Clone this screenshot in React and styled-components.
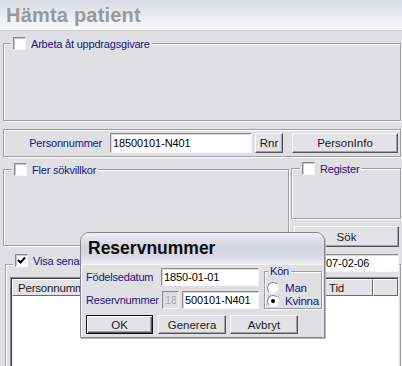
import React from "react";
import styled, { createGlobalStyle, css } from "styled-components";

const GlobalStyle = createGlobalStyle`
  html, body {
    margin: 0;
    padding: 0;
    background: #e0dfe3;
  }
  body {
    font-family: "Liberation Sans", Arial, sans-serif;
    font-size: 11px;
    letter-spacing: -0.2px;
  }
`;

const Window = styled.div`
  position: relative;
  width: 402px;
  height: 366px;
  overflow: hidden;
  background: #e0dfe3;
`;

const TitleBar = styled.div`
  height: 30px;
  display: flex;
  align-items: center;
  padding-left: 6px;
  border-bottom: 1px solid #cbcbd3;
  background: linear-gradient(#d9d9e4, #fbfbfd);
  font-size: 20px;
  font-weight: bold;
  letter-spacing: 0.2px;
  color: #99999d;
`;

const Content = styled.div`
  display: flex;
  flex-direction: column;
  padding: 0 1px 0 3px;
`;

const Group = styled.div`
  display: flex;
  flex-direction: column;
  box-sizing: border-box;
  height: ${(p) => p.$h}px;
  width: ${(p) => (p.$w ? `${p.$w}px` : "auto")};
  margin: ${(p) => p.$m || "0"};
  flex: ${(p) => (p.$grow ? 1 : "none")};
  border: 1px solid #9d9da3;
  box-shadow: inset 1px 1px 0 #fff, 1px 1px 0 #fff;
`;

const Legend = styled.div`
  display: flex;
  align-items: center;
  gap: 5px;
  align-self: flex-start;
  height: 13px;
  margin: ${(p) => (p.$inline ? "0" : "-7px")} 0 0 ${(p) => p.$ml ?? 7}px;
  padding: 0 2px;
  background: #e0dfe3;
  color: #16167c;
  white-space: nowrap;
`;

const Check = styled.span`
  display: inline-flex;
  align-items: center;
  justify-content: center;
  width: 13px;
  height: 13px;
  box-sizing: border-box;
  background: #fff;
  border: 1px solid;
  border-color: #8a8a8a #f4f4f4 #f4f4f4 #8a8a8a;
  box-shadow: inset 1px 1px 0 #c8c8c8;
`;

const Panel = styled.div`
  display: flex;
  align-items: center;
  height: 28px;
  margin-top: 8px;
  box-sizing: border-box;
  border: 1px solid #9d9da3;
  box-shadow: inset 1px 1px 0 #fff, 1px 1px 0 #fff;
`;

const Label = styled.span`
  width: ${(p) => p.$w}px;
  text-align: ${(p) => (p.$right ? "right" : "left")};
  color: #16167c;
  white-space: nowrap;
  flex: none;
`;

const Field = styled.input`
  box-sizing: border-box;
  width: ${(p) => p.$w}px;
  height: ${(p) => p.$h || 18}px;
  margin: 0 0 0 ${(p) => p.$ml || 0}px;
  padding: 0 2px;
  font: inherit;
  letter-spacing: -0.1px;
  color: #000;
  background: #fff;
  border: 1px solid;
  border-color: #8a8a8a #f6f6f6 #f6f6f6 #8a8a8a;
  box-shadow: inset 1px 1px 0 #d8d8d8;
  outline: none;
  flex: none;

  &:disabled {
    background: #e0dfe3;
    color: #a7a7ab;
    text-align: center;
  }
`;

const Button = styled.button`
  box-sizing: border-box;
  width: ${(p) => p.$w}px;
  height: ${(p) => p.$h || 20}px;
  margin: 0 0 0 ${(p) => p.$ml || 0}px;
  padding: 0;
  font: inherit;
  font-size: 11.5px;
  color: #1a1a1a;
  background: #e3e2e6;
  border: 1px solid;
  border-color: #fbfbfb #555 #555 #fbfbfb;
  box-shadow: inset -1px -1px 0 #a2a2a6;
  flex: none;

  ${(p) =>
    p.$default &&
    css`
      border: 1px solid #111;
      box-shadow: inset 1px 1px 0 #fbfbfb, inset -1px -1px 0 #555,
        inset -2px -2px 0 #a2a2a6;
    `}
`;

const Row = styled.div`
  display: flex;
  margin-top: ${(p) => p.$mt || 0}px;
`;

const SideColumn = styled.div`
  display: flex;
  flex-direction: column;
  width: 110px;
  margin: -1px 0 0 2px;
`;

const GroupHead = styled.div`
  display: flex;
  align-items: center;
  height: 18px;
  margin: -11px 1px 0 0;
`;

const ListView = styled.div`
  display: flex;
  flex-direction: column;
  flex: 1;
  margin: 5px 1px 0 4px;
  background: #fff;
  border: 1px solid;
  border-color: #8a8a8a #f6f6f6 #f6f6f6 #8a8a8a;
  box-shadow: inset 1px 1px 0 #404040;
  padding: 1px 0 0 1px;
`;

const ListHeader = styled.div`
  display: flex;
  height: 17px;
`;

const HeaderCell = styled.div`
  box-sizing: border-box;
  width: ${(p) => (p.$w ? `${p.$w}px` : "auto")};
  flex: ${(p) => (p.$w ? "none" : 1)};
  display: flex;
  align-items: center;
  padding-left: 5px;
  background: #e3e2e6;
  border: 1px solid;
  border-color: #fbfbfb #6a6a6a #6a6a6a #fbfbfb;
  font-size: 11.5px;
  color: #1a1a1a;
  white-space: nowrap;
  overflow: hidden;
`;

const Dialog = styled.div`
  position: absolute;
  left: 80px;
  top: 232px;
  width: 245px;
  height: 106px;
  box-sizing: border-box;
  display: flex;
  flex-direction: column;
  background: #e0dfe3;
  border: 1px solid #85859a;
  border-radius: 9px 9px 0 0;
  overflow: hidden;
  box-shadow: 1px 1px 0 #b8b8c4;
`;

const DialogTitle = styled.div`
  height: 31px;
  flex: none;
  display: flex;
  align-items: center;
  padding-left: 7px;
  background: linear-gradient(#eeeef4 0%, #d3d3df 45%, #d9d9e4 75%, #ececf2 100%);
  font-size: 17.5px;
  font-weight: bold;
  letter-spacing: 0;
  color: #0c0c0c;
`;

const DialogBody = styled.div`
  flex: 1;
  display: flex;
  flex-direction: column;
  padding: 3px 4px 0 4px;
  border-top: 1px solid #f8f8fb;
  border-left: 1px solid #f8f8fb;
`;

const Fields = styled.div`
  display: flex;
  flex-direction: column;
  gap: 5px;
`;

const FieldRow = styled.div`
  display: flex;
  align-items: center;
`;

const RadioRow = styled.div`
  display: flex;
  align-items: center;
  gap: 6px;
  height: 14px;
  color: #16167c;
  font-size: 11.5px;
  padding-left: 2px;
`;

const Radio = styled.span`
  display: inline-flex;
  align-items: center;
  justify-content: center;
  width: 12px;
  height: 12px;
  box-sizing: border-box;
  border-radius: 50%;
  background: #fff;
  border: 1px solid;
  border-color: #8a8a8a #f4f4f4 #f4f4f4 #8a8a8a;

  &::after {
    content: "";
    width: 4px;
    height: 4px;
    border-radius: 50%;
    background: ${(p) => (p.$on ? "#000" : "transparent")};
  }
`;

const CheckBox = ({ checked }) => (
  <Check>
    {checked && (
      <svg width="9" height="9" viewBox="0 0 9 9">
        <polyline
          points="1,4 3.5,6.5 8,1.5"
          fill="none"
          stroke="#000"
          strokeWidth="2"
        />
      </svg>
    )}
  </Check>
);

export default function App() {
  return (
    <>
      <GlobalStyle />
      <Window>
        <TitleBar>Hämta patient</TitleBar>
        <Content>
          <Group $h={78} $m="12px 0 0 0">
            <Legend>
              <CheckBox />
              Arbeta åt uppdragsgivare
            </Legend>
          </Group>

          <Panel>
            <Label $w={98} $right>
              Personnummer
            </Label>
            <Field $w={142} $h={20} $ml={8} readOnly value="18500101-N401" />
            <Button $w={28} $ml={3}>
              Rnr
            </Button>
            <Button $w={106} $ml={9}>
              PersonInfo
            </Button>
          </Panel>

          <Row $mt={12}>
            <Group $h={77} $grow>
              <Legend $ml={8}>
                <CheckBox />
                Fler sökvillkor
              </Legend>
            </Group>
            <SideColumn>
              <Group $h={51}>
                <Legend $ml={8}>
                  <CheckBox />
                  Register
                </Legend>
              </Group>
              <Button $w={105} $h={21} $ml={3} style={{ marginTop: 7 }}>
                Sök
              </Button>
            </SideColumn>
          </Row>

          <Group $h={130} $m="17px 0 0 2px">
            <GroupHead>
              <Legend $inline>
                <CheckBox checked />
                Visa senaste
              </Legend>
              <Field $w={88} readOnly value="2007-02-06" style={{ marginLeft: "auto" }} />
            </GroupHead>
            <ListView>
              <ListHeader>
                <HeaderCell $w={110}>Personnummer</HeaderCell>
                <HeaderCell $w={201}>Namn</HeaderCell>
                <HeaderCell $w={50}>Tid</HeaderCell>
                <HeaderCell />
              </ListHeader>
            </ListView>
          </Group>
        </Content>

        <Dialog>
          <DialogTitle>Reservnummer</DialogTitle>
          <DialogBody>
            <Row>
              <Fields>
                <FieldRow>
                  <Label $w={75}>Födelsedatum</Label>
                  <Field $w={98} readOnly value="1850-01-01" />
                </FieldRow>
                <FieldRow>
                  <Label $w={76}>Reservnummer</Label>
                  <Field $w={17} disabled value="18" />
                  <Field $w={77} $ml={3} readOnly value="500101-N401" />
                </FieldRow>
              </Fields>
              <Group $w={58} $h={38} $m="3px 0 0 5px">
                <Legend $ml={3}>Kön</Legend>
                <RadioRow style={{ marginTop: 3 }}>
                  <Radio />
                  Man
                </RadioRow>
                <RadioRow>
                  <Radio $on />
                  Kvinna
                </RadioRow>
              </Group>
            </Row>
            <Row $mt={6}>
              <Button $w={67} $h={19} $default>
                OK
              </Button>
              <Button $w={68} $h={19} $ml={5}>
                Generera
              </Button>
              <Button $w={68} $h={19} $ml={4}>
                Avbryt
              </Button>
            </Row>
          </DialogBody>
        </Dialog>
      </Window>
    </>
  );
}
